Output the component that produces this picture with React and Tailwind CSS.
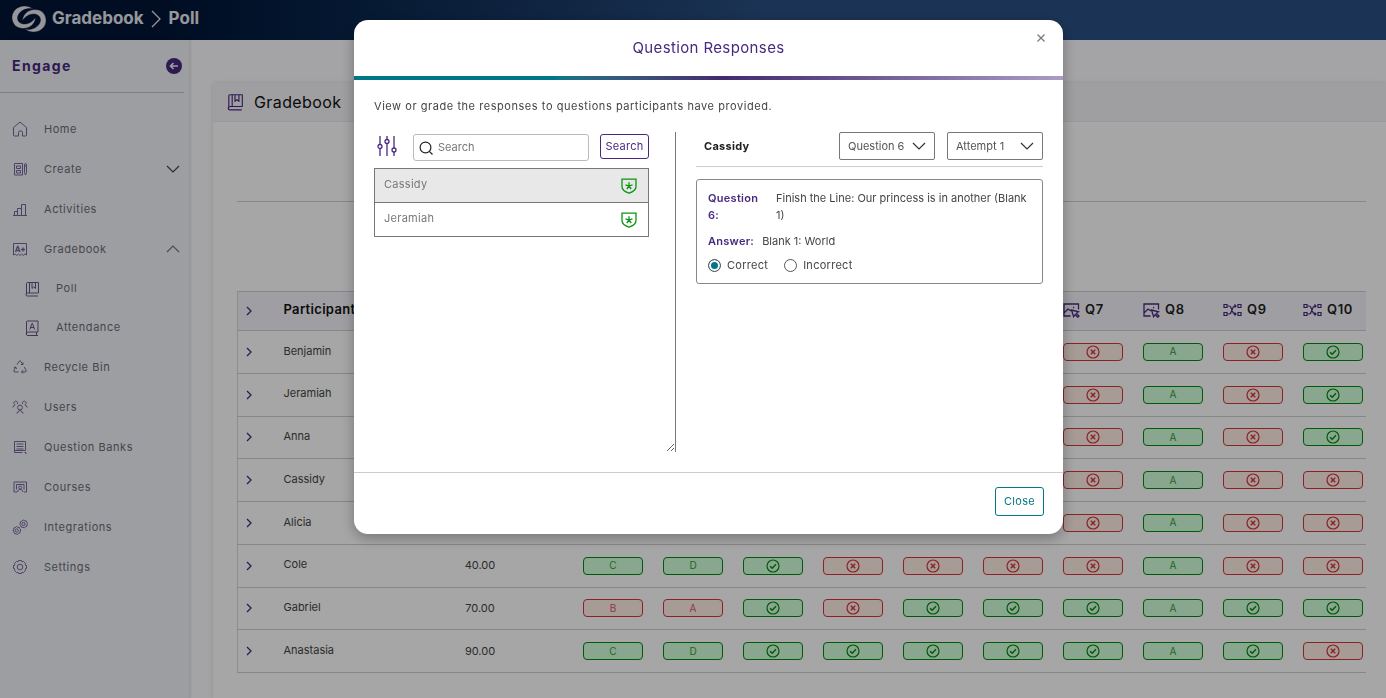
import React, { useState } from 'react';

const NAV = [
  { label: 'Home', icon: 'home' },
  { label: 'Create', icon: 'create', chevron: 'down' },
  { label: 'Activities', icon: 'activities' },
  {
    label: 'Gradebook',
    icon: 'gradebook',
    chevron: 'up',
    children: [
      { label: 'Poll', icon: 'poll' },
      { label: 'Attendance', icon: 'attendance' },
    ],
  },
  { label: 'Recycle Bin', icon: 'recycle' },
  { label: 'Users', icon: 'users' },
  { label: 'Question Banks', icon: 'banks' },
  { label: 'Courses', icon: 'courses' },
  { label: 'Integrations', icon: 'integrations' },
  { label: 'Settings', icon: 'settings' },
];

const QUESTIONS = [
  { label: 'Q1', icon: 'image' },
  { label: 'Q2', icon: 'image' },
  { label: 'Q3', icon: 'image' },
  { label: 'Q4', icon: 'image' },
  { label: 'Q5', icon: 'image' },
  { label: 'Q6', icon: 'image' },
  { label: 'Q7', icon: 'image' },
  { label: 'Q8', icon: 'image' },
  { label: 'Q9', icon: 'match' },
  { label: 'Q10', icon: 'match' },
];

// "+" marks a correct cell, "-" an incorrect one; a letter is the chosen option
const ROWS = [
  { name: 'Benjamin', score: '60.00', cells: ['+C', '+D', '+', '+', '-', '-', '-', '+A', '-', '+'] },
  { name: 'Jeramiah', score: '60.00', cells: ['+C', '+D', '+', '-', '+', '-', '-', '+A', '-', '+'] },
  { name: 'Anna', score: '50.00', cells: ['+C', '-A', '+', '-', '+', '-', '-', '+A', '-', '+'] },
  { name: 'Cassidy', score: '50.00', cells: ['+C', '+D', '+', '-', '-', '+', '-', '+A', '-', '-'] },
  { name: 'Alicia', score: '40.00', cells: ['+C', '+D', '+', '-', '-', '-', '-', '+A', '-', '-'] },
  { name: 'Cole', score: '40.00', cells: ['+C', '+D', '+', '-', '-', '-', '-', '+A', '-', '-'] },
  { name: 'Gabriel', score: '70.00', cells: ['-B', '-A', '+', '-', '+', '+', '+', '+A', '+', '+'] },
  { name: 'Anastasia', score: '90.00', cells: ['+C', '+D', '+', '+', '+', '+', '+', '+A', '+', '-'] },
];

const ICONS = {
  home: <path d="M1.500 6.500 8 1l6.500 5.500v7.500q0 1-1 1H10.500v-3.500a1.500 1.500 0 0 0-1.500-1.500H8a1.500 1.500 0 0 0-1.500 1.500V15H2.500q-1 0-1-1z" />,
  create: (
    <>
      <path d="M2.500 2.500h8v11.500h-8zM4.500 5h4v2.500h-4zM4.500 9.500h4v2.500h-4z" />
      <path d="M12.500 4q0-1.500 1-1.500t1 1.500v7.500l-1 2.500-1-2.500zM12.500 5h2" />
    </>
  ),
  activities: <path d="M1 14.500h14M2.500 14.500v-4h3v4M5.500 14.500V7.500h4v7M9.500 14.500V3.500h4v11M5.500 10.500V8.500M9.500 7.500V5.500" />,
  gradebook: (
    <>
      <path d="M1.500 14V2.500h13V14l-1.600-1-1.600 1.500-1.600-1.500-1.700 1.500-1.600-1.500-1.600 1.500-1.700-1.500z" />
      <path strokeWidth="1.300" d="M3.500 11 5.500 5.500h.5L8 11M4.200 9.500h3M9 8.500h4M11 6.500v4" />
    </>
  ),
  poll: <path d="M3.500 1.500h11v10.500h-11a1.500 1.500 0 0 0 0 3h10.500M2.500 13.500V2.500q0-1 1-1M5.500 1.500V12M8 1.500v6l1.700-1.600L11.500 7.500v-6" />,
  attendance: <path d="M3.500 1h10.500v11H4a1.600 1.600 0 0 0 0 3.500h10M12.500 12v3.500M2.500 14V2q0-1 1-1M5.800 9.500l2.200-6h.4l2.200 6M6.600 7.500h3.300" />,
  recycle: (
    <>
      <path d="M5 5.500 7 2.500Q8 1 9 2.500l1.700 3M9 5.500h2v-2" />
      <path d="M12.200 8l1.900 3.300q.7 1.700-1.100 1.700H9.500M11 11.200 9.500 13l1.500 1.500" />
      <path d="M6.500 13H3q-1.800 0-1-1.700L3.700 8M1.800 8.700 3.700 8l.9 1.900" />
    </>
  ),
  users: (
    <>
      <circle cx="8" cy="8.500" r="2.400" />
      <path d="M4.500 14h1.200q.3-2.500 2.300-2.500t2.300 2.500h1.200M5.500 5A1.900 1.900 0 1 0 2.500 5.500M.8 8.500q.2-2 2.500-2.500M10.500 5a1.900 1.900 0 1 1 3 .5M15.200 8.500q-.2-2-2.500-2.500" />
    </>
  ),
  banks: <path d="M2.500 2.500h11v9M2.500 2.500v11h8M4.500 5h7M4.500 7.500h7M4.500 10h7M2.500 11.500h11M12.500 13.500h1.500v1.500" />,
  courses: (
    <>
      <path d="M5 13H2V3h12.500v10H12" />
      <path d="M4.500 10.500v-5h7.500v5" />
      <circle cx="8.200" cy="8.500" r="1.500" />
      <path d="M5.500 13c.3-1.800 1.300-2.500 2.700-2.500s2.500.7 2.800 2.500" />
    </>
  ),
  integrations: (
    <>
      <path d="m11.300 1 1.300.8h1.500l.5 1.400 1 1.100-.6 1.400-.1 1.500-1.400.6-1.200 1-1.400-.5-1.500-.1-.6-1.400-.9-1.200.5-1.400.1-1.500 1.400-.6z" />
      <circle cx="11.500" cy="5" r="1.600" />
      <path d="m4.500 7.500 1.300.8h1.500l.5 1.400 1 1.100-.6 1.400-.1 1.500-1.400.6-1.200 1-1.400-.5-1.500-.1-.6-1.400-.9-1.200.5-1.400.1-1.500 1.400-.6z" />
      <circle cx="4.700" cy="11.500" r="1.600" />
    </>
  ),
  settings: (
    <>
      <path d="M6.500 1.500h3l.5 1.400 1.400-.5 2.200 2.200-.5 1.400 1.400.5v3l-1.400.5.5 1.400-2.200 2.200-1.400-.5-.5 1.400h-3L6 13.100l-1.400.5-2.200-2.200.5-1.400-1.400-.5v-3L2.900 6l-.5-1.400 2.200-2.200 1.400.5z" />
      <circle cx="8" cy="8" r="2.800" />
    </>
  ),
};

function NavIcon({ name, className }) {
  return (
    <svg viewBox="0 0 16 16" className={className} fill="none" stroke="currentColor" strokeWidth="1" strokeLinejoin="round" aria-hidden="true">
      {ICONS[name]}
    </svg>
  );
}

function Chevron({ direction = 'down', className }) {
  return (
    <svg viewBox="0 0 14 8" className={className} fill="none" stroke="currentColor" strokeWidth="1.200" aria-hidden="true">
      <path d={direction === 'down' ? 'M1 1l6 6 6-6' : 'M1 7l6-6 6 6'} />
    </svg>
  );
}

const SWOOSH = 'M33 8C28 3.500 19 4 14.500 9.500 10.500 14.500 11.500 21 15.500 25 20 28.500 27 28 31 25 33.500 23 35.500 20 35.500 16.500 33 20.500 28 23.500 23.500 23 18.500 22.500 16 18 18.500 13.500 21.500 8.500 28 6.500 33 8Z';

function Logo() {
  return (
    <svg viewBox="11 3 36 30" className="h-[30px] w-9" fill="currentColor" stroke="#001536" strokeWidth=".4" aria-hidden="true">
      <path d={SWOOSH} />
      <path d={SWOOSH} transform="rotate(180 29 18)" />
    </svg>
  );
}

function QuestionIcon({ type }) {
  if (type === 'match') {
    return (
      <svg viewBox="0 0 19 14" className="h-3.5 w-[19px] shrink-0" fill="none" stroke="currentColor" strokeWidth="1.200" aria-hidden="true">
        <path d="M1 1.500h3v3H1zM1 9.500h3v3H1zM15 1.500h3v3h-3zM15 9.500h3v3h-3z" />
        <path d="M4.500 3H6q1.500 0 2 1.500l2 5q.5 1.500 2 1.500h1M4.500 11H6q1.500 0 2-1.500l2-5Q10.500 3 12 3h1M11.500 1.500 13 3l-1.500 1.500M11.500 9.500 13 11l-1.500 1.500" />
      </svg>
    );
  }
  return (
    <svg viewBox="0 0 17 15" className="h-[15px] w-[17px] shrink-0" fill="none" stroke="currentColor" strokeWidth="1.300" aria-hidden="true">
      <path d="M7.500 13H1V1h14.500v5.500M1.500 9.500 5 6l3 2M10 4.500h1.200" />
      <path d="M8.500 7l7 1.800-2.200 1.700 2.700 2.500-1.200 1.200-2.600-2.500-1.600 2z" />
    </svg>
  );
}

function ResultBadge({ cell }) {
  const correct = cell[0] === '+';
  const letter = cell.slice(1);
  const tone = correct ? 'border-[#008a0f] bg-[#d3ffda] text-[#008a0f]' : 'border-[#d7343b] bg-[#ffeee5] text-[#d7343b]';

  return (
    <button type="button" className={`flex h-[18px] w-[60px] items-center justify-center rounded-[4px] border text-[10px] ${tone}`}>
      {letter ? (
        <span className="opacity-80">{letter}</span>
      ) : (
        <svg viewBox="0 0 14 14" className="size-3.5" fill="none" stroke="currentColor" strokeWidth="1.200" aria-label={correct ? 'Correct' : 'Incorrect'}>
          <circle cx="7" cy="7" r="6" />
          <path strokeWidth="1.400" d={correct ? 'M4 7.200 6.200 9.200 10 5.300' : 'M4.800 4.800l4.400 4.400M9.200 4.800 4.800 9.200'} />
        </svg>
      )}
    </button>
  );
}

function Sidebar() {
  return (
    <nav className="w-[189px] shrink-0 bg-[#f2f3f9] shadow-[1px_0_3px_rgba(0,0,0,0.15)]">
      <div className="mr-[5px] flex h-[53px] items-center justify-between border-b border-[#c4c5cc] pl-3 pr-0.5">
        <h2 className="text-sm font-bold tracking-widest text-[#482980]">Engage</h2>
        <button type="button" aria-label="Collapse menu" className="text-[#482980]">
          <svg viewBox="0 0 16 16" className="size-4" aria-hidden="true">
            <circle cx="8" cy="8" r="8" fill="currentColor" />
            <path d="M12 8H5M7.500 5 4.500 8l3 3" fill="none" stroke="#f2f3f9" strokeWidth="1.600" />
          </svg>
        </button>
      </div>

      <ul className="pt-4 text-[11px] tracking-wider text-[#6a6c75]">
        {NAV.map((item) => (
          <li key={item.label}>
            <a href={`#${item.icon}`} className="flex h-10 items-center pl-3 pr-[9px]">
              <NavIcon name={item.icon} className="mr-4 size-4 text-[#77659b]" />
              {item.label}
              {item.chevron && (
                <Chevron direction={item.chevron} className={`ml-auto h-2 w-3.5 ${item.chevron === 'up' ? 'text-[#777]' : 'text-[#444]'}`} />
              )}
            </a>
            {item.children && (
              <ul>
                {item.children.map((child) => (
                  <li key={child.label}>
                    <a href={`#${child.icon}`} className="flex h-[39px] items-center pl-6">
                      <NavIcon name={child.icon} className="mr-4 size-4 text-[#665488]" />
                      {child.label}
                    </a>
                  </li>
                ))}
              </ul>
            )}
          </li>
        ))}
      </ul>
    </nav>
  );
}

function GradebookTable() {
  return (
    <table className="h-[382px] w-full table-fixed border-collapse border-l border-[#d9d9de] text-left">
      <colgroup>
        <col className="w-9" />
        <col />
        <col className="w-[186px]" />
        {QUESTIONS.map((q) => (
          <col key={q.label} className={q.label === 'Q10' ? 'w-[73px]' : 'w-20'} />
        ))}
      </colgroup>
      <thead>
        <tr className="h-[39px] border-y border-[#cfd0d4] bg-[#f5f5fb]">
          <th className="pl-[7px]">
            <button type="button" aria-label="Expand all" className="block text-[#482980]">
              <RowArrow />
            </button>
          </th>
          <th className="pb-0.5 pl-2.5 text-[13px] font-semibold tracking-wide text-[#111]">Participant</th>
          <th className="pb-0.5 text-center text-[13px] font-semibold tracking-wide text-[#111]">Score</th>
          {QUESTIONS.map((q) => (
            <th key={q.label} className="pb-0.5 pl-2.5 text-[13px] font-semibold">
              <span className="flex items-center gap-[5px] text-[#482980]">
                <QuestionIcon type={q.icon} />
                <span className="tracking-wider text-[#222]">{q.label}</span>
              </span>
            </th>
          ))}
        </tr>
      </thead>
      <tbody>
        {ROWS.map((row) => (
          <tr key={row.name} className="h-[42px] border-b border-[#cfcfcf]">
            <td className="pl-[7px]">
              <button type="button" aria-label={`Expand ${row.name}`} className="block text-[#482980]">
                <RowArrow />
              </button>
            </td>
            <td className="pb-0.5 pl-2.5 text-[11px] text-[#444]">{row.name}</td>
            <td className="text-center text-[11px] text-[#444]">{row.score}</td>
            {row.cells.map((cell, i) => (
              <td key={QUESTIONS[i].label} className="pl-2.5">
                <ResultBadge cell={cell} />
              </td>
            ))}
          </tr>
        ))}
      </tbody>
    </table>
  );
}

function RowArrow() {
  return (
    <svg viewBox="0 0 8 10" className="h-2.5 w-2" fill="none" stroke="currentColor" strokeWidth="1.300" aria-hidden="true">
      <path d="M2 1l4 4-4 4" />
    </svg>
  );
}

function ShieldIcon() {
  return (
    <svg viewBox="0 0 16 16" className="size-4 text-[#0a9410]" fill="none" stroke="currentColor" strokeWidth="1.300" aria-hidden="true">
      <path d="M1 1.200h14V8.500c0 3.500-3.500 5.500-7 6.700-3.500-1.200-7-3.200-7-6.700z" />
      <path d="M8 4.200V8M8 8l3.500-1.200M8 8 4.500 6.800M8 8l2.200 3M8 8l-2.200 3" />
    </svg>
  );
}

function Picker({ label, options }) {
  return (
    <div className="relative">
      <select aria-label={label} className="h-7 w-24 appearance-none rounded-[2px] border border-[#777] bg-white pl-2 text-[11px] text-[#555]">
        {options.map((option) => (
          <option key={option}>{option}</option>
        ))}
      </select>
      <Chevron className="pointer-events-none absolute right-[9px] top-2.5 h-2 w-3.5 text-[#333]" />
    </div>
  );
}

function ResponsesModal() {
  const [selected, setSelected] = useState('Cassidy');
  const [verdict, setVerdict] = useState('correct');

  return (
    <div className="fixed inset-0 flex items-start justify-center bg-black/35 pl-[31px] pt-5">
      <div role="dialog" aria-labelledby="modal-title" className="w-[709px] max-w-full overflow-hidden rounded-[14px] bg-white shadow-[0_4px_14px_rgba(0,0,0,0.3)]">
        {/* Header */}
        <div className="relative flex h-14 items-center justify-center">
          <h2 id="modal-title" className="text-[15px] tracking-wide text-[#482980]">Question Responses</h2>
          <button type="button" aria-label="Close dialog" className="absolute right-[18px] top-3.5 text-[#777]">
            <svg viewBox="0 0 8 8" className="size-2" fill="none" stroke="currentColor" strokeWidth="1.200" aria-hidden="true">
              <path d="M.5.500l7 7M7.500.500l-7 7" />
            </svg>
          </button>
        </div>
        <div className="h-1 bg-linear-to-r from-[#007787] from-28% via-[#432a6f] via-52% to-[#ab9cc6]" />

        {/* Body */}
        <div className="px-5 pb-5 pt-[18px]">
          <p className="text-[11px] leading-4 tracking-wider text-[#444]">
            View or grade the responses to questions participants have provided.
          </p>

          <div className="mt-[18px] flex gap-5">
            <div className="h-80 w-[302px] shrink-0 resize-x overflow-auto border-r border-[#777] pr-[26px]">
              <div className="flex h-9 items-start pt-0.5">
                <button type="button" aria-label="Filters" className="ml-[3px] mt-0.5 text-[#482980]">
                  <svg viewBox="0 0 20 20" className="size-5" fill="none" stroke="currentColor" strokeWidth="1.300" aria-hidden="true">
                    <path d="M3 0v8.500M3 12.500V20M10 0v3.500M10 7.500V20M17 0v12M17 16v4" />
                    <circle cx="3" cy="10.500" r="2" />
                    <circle cx="10" cy="5.500" r="2" />
                    <circle cx="17" cy="14" r="2" />
                  </svg>
                </button>
                <label className="ml-4 flex h-[27px] w-44 items-center rounded-[3px] border border-[#bbb] pl-[5px]">
                  <svg viewBox="0 0 14 14" className="size-3.5 shrink-0 text-[#222]" fill="none" stroke="currentColor" strokeWidth="1.200" aria-hidden="true">
                    <circle cx="6.500" cy="6.500" r="5.400" />
                    <path d="M10.300 10.300 13.500 13.500" />
                  </svg>
                  <input type="text" aria-label="Search participants" placeholder="Search" className="ml-[5px] w-full bg-transparent text-[11px] outline-none placeholder:text-[#777]" />
                </label>
                <button type="button" className="ml-auto h-[25px] w-[49px] rounded-[3px] border border-[#482980] text-[11px] tracking-wide text-[#482980]">
                  Search
                </button>
              </div>

              <ul className="divide-y divide-[#777] border border-[#777] text-[11px] text-[#777]">
                {['Cassidy', 'Jeramiah'].map((name) => (
                  <li key={name}>
                    <button
                      type="button"
                      onClick={() => setSelected(name)}
                      className={`flex h-[33px] w-full items-center justify-between pl-[9px] pr-[11px] ${selected === name ? 'bg-[#e8e8e8]' : 'bg-white'}`}
                    >
                      <span className="pb-0.5 tracking-wide">{name}</span>
                      <ShieldIcon />
                    </button>
                  </li>
                ))}
              </ul>
            </div>

            <div className="min-w-0 flex-1">
              <div className="flex h-[35px] items-start gap-3 border-b border-[#ccc]">
                <h3 className="mr-auto pl-2 text-[11px] font-bold leading-7 tracking-wide text-[#222]">{selected}</h3>
                <Picker label="Question" options={['Question 6']} />
                <Picker label="Attempt" options={['Attempt 1']} />
              </div>

              <div className="mt-3 rounded-[3px] border border-[#888] px-[11px] pb-[9px] pt-2.5 text-[11px] leading-[17px] text-[#444]">
                <div className="flex">
                  <span className="w-[68px] shrink-0 pr-2 font-semibold tracking-wide text-[#482980]">Question 6:</span>
                  <span>Finish the Line: Our princess is in another (Blank 1)</span>
                </div>
                <div className="mt-[9px] flex gap-2">
                  <span className="font-semibold tracking-wide text-[#482980]">Answer:</span>
                  <span>Blank 1: World</span>
                </div>
                <div className="mt-[7px] flex gap-4">
                  {['Correct', 'Incorrect'].map((label) => (
                    <label key={label} className="flex items-center gap-1.5 tracking-wide">
                      <input
                        type="radio"
                        name="verdict"
                        checked={verdict === label.toLowerCase()}
                        onChange={() => setVerdict(label.toLowerCase())}
                        className="size-[13px] appearance-none rounded-full border border-[#555] bg-white shadow-[inset_0_0_0_2px_white] checked:bg-[#007787]"
                      />
                      {label}
                    </label>
                  ))}
                </div>
              </div>
            </div>
          </div>
        </div>

        {/* Footer */}
        <div className="flex justify-end border-t border-[#ccc] px-[19px] pb-[18px] pt-3.5">
          <button type="button" className="h-[29px] w-[49px] rounded-[3px] border border-[#007787] text-[11px] tracking-wide text-[#007787]">
            Close
          </button>
        </div>
      </div>
    </div>
  );
}

export default function App() {
  return (
    <div className="flex min-h-screen flex-col bg-[#fcfcff] font-['Inter',sans-serif]">
      <header className="flex h-10 items-center bg-linear-to-r from-[#001536] from-12% to-[#2a4f82] to-55% pb-0.5 pl-[11px] text-[17px] font-bold text-[#e8e8ee]">
        <Logo />
        <span className="ml-[5px]">Gradebook</span>
        <svg viewBox="0 0 10 18" className="ml-[7px] mr-2 h-[18px] w-2.5" fill="none" stroke="currentColor" strokeWidth="1.300" aria-hidden="true">
          <path d="M1 1l8 8-8 8" />
        </svg>
        <span>Poll</span>
      </header>

      <div className="flex flex-1">
        <Sidebar />
        <main className="ml-6 mt-[43px] min-w-0 flex-1 rounded-tl-[4px] bg-white shadow-[0_0_5px_rgba(0,0,0,0.12)]">
          <div className="flex h-[39px] items-center gap-2.5 border-b border-[#ececf2] bg-[#f4f4f8] pl-[13px]">
            <NavIcon name="poll" className="size-[18px] text-[#482980]" />
            <h1 className="text-base tracking-wide text-[#111]">Gradebook</h1>
          </div>
          <div className="pb-[26px] pl-6 pr-5">
            <div className="mb-[89px] h-20 border-b border-[#cfcfd6]" />
            <GradebookTable />
          </div>
        </main>
      </div>
      <ResponsesModal />
    </div>
  );
}
